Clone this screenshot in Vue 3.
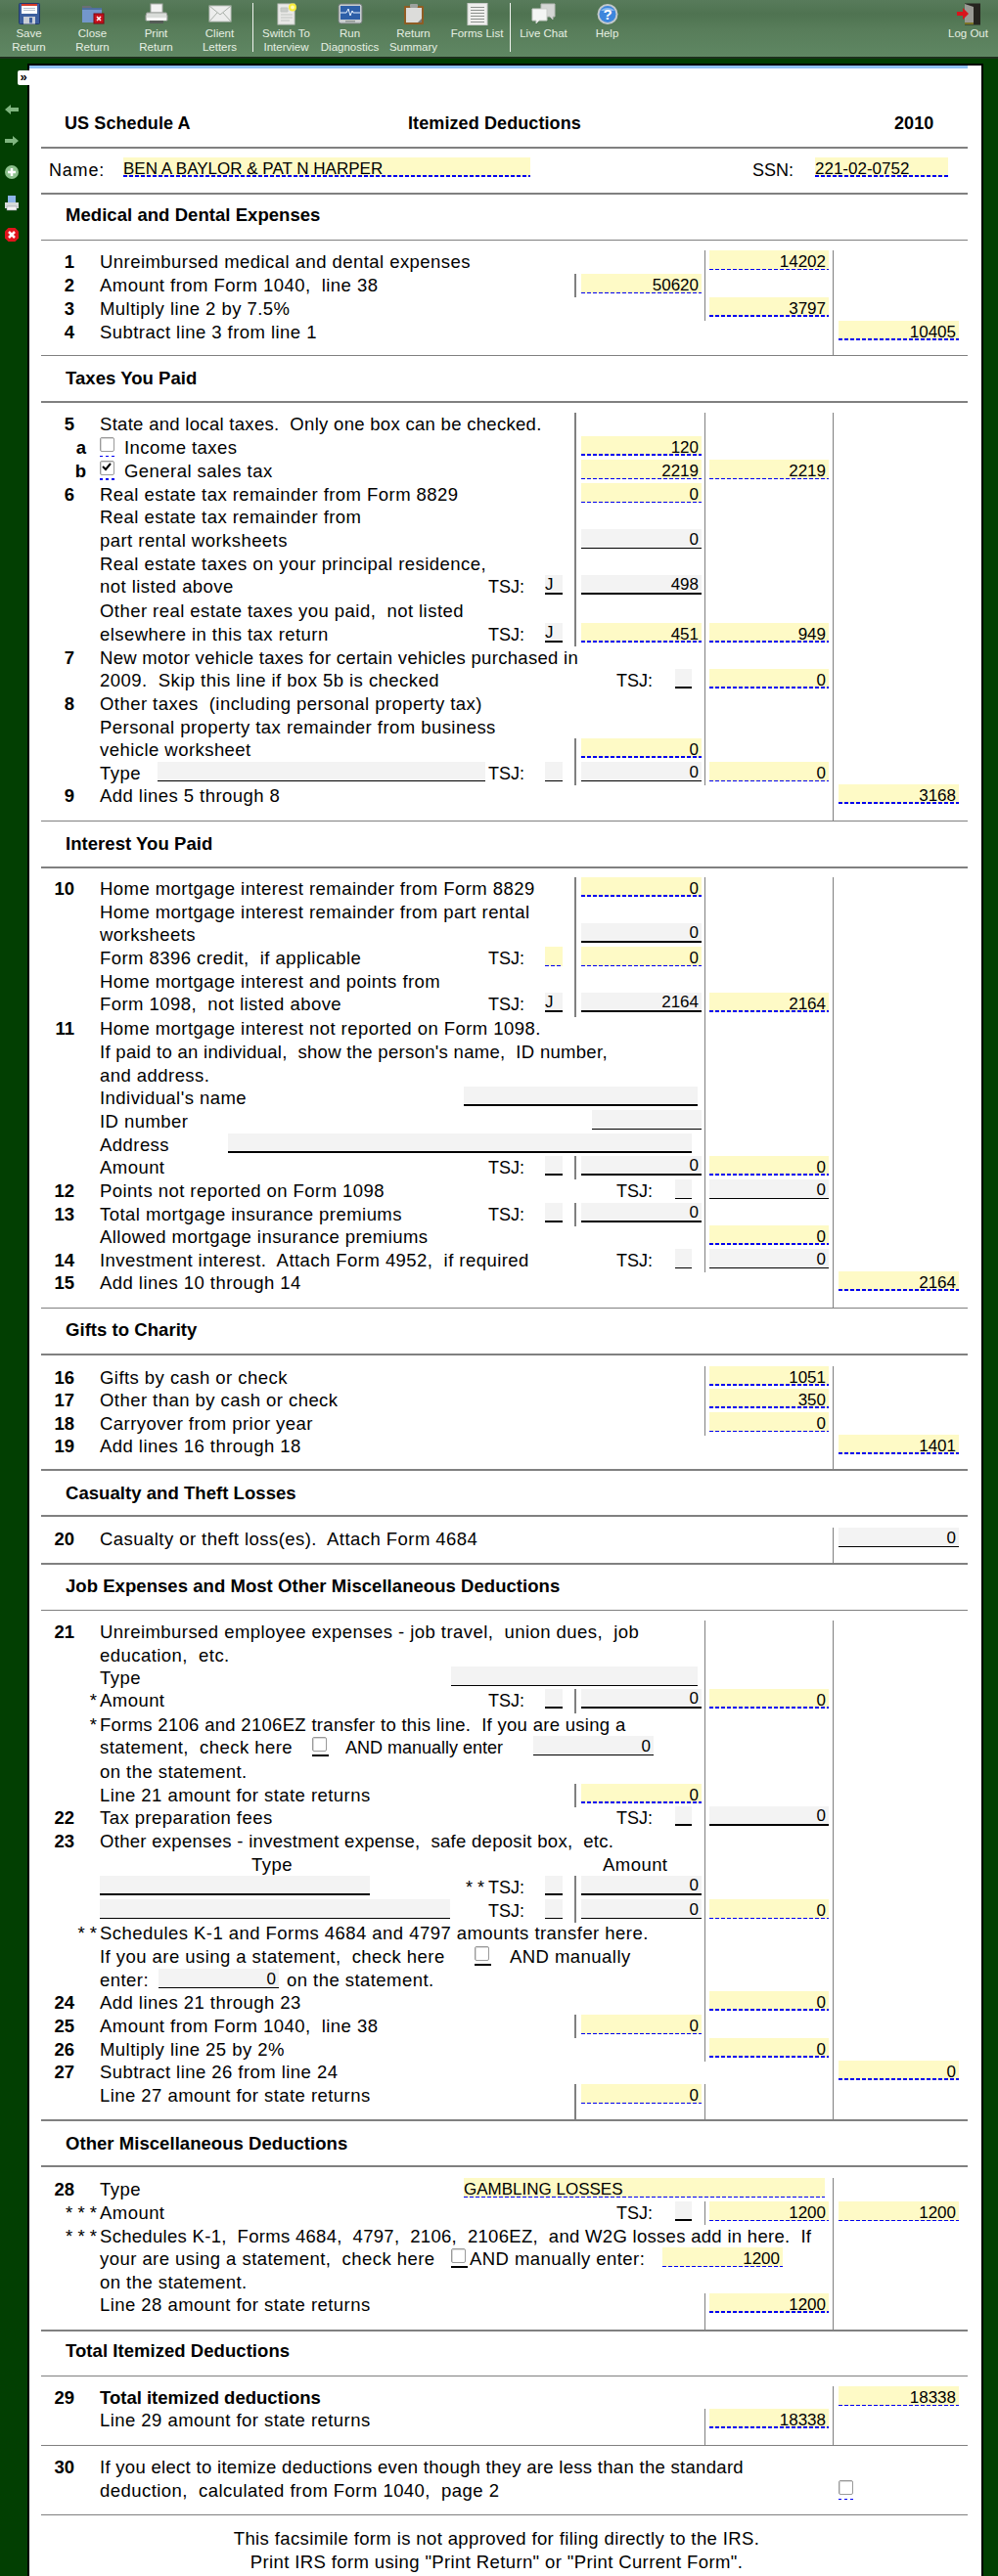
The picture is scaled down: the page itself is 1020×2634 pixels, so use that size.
<script setup>
const Y = (v, t = 2, x = {}) => ({ k: 'f', tone: 'y', v, t, ...x })
const G = (v, t = 2, x = {}) => ({ k: 'f', tone: 'g', v, t, ...x })
const CK = (t = 2, x = {}) => ({ k: 'ck', t, ...x })
const T = (x, v, tight, snug) => ({ k: 't', x, v, tight, snug })

const tools = [
  { id: 'save', l: ['Save', 'Return'] },
  { id: 'close', l: ['Close', 'Return'] },
  { id: 'print', l: ['Print', 'Return'] },
  { id: 'mail', l: ['Client', 'Letters'] },
  { sep: true },
  { id: 'switch', l: ['Switch To', 'Interview'] },
  { id: 'diag', l: ['Run', 'Diagnostics'] },
  { id: 'clip', l: ['Return', 'Summary'] },
  { id: 'list', l: ['Forms List'] },
  { sep: true },
  { id: 'chat', l: ['Live Chat'] },
  { id: 'help', l: ['Help'] },
  { id: 'logout', l: ['Log Out'], end: true }
]

const list = []
const rule = (y, t = 1) => list.push({ kind: 'rule', y, t })
const head = (y, text, c) => list.push({ kind: 'head', y, text, pad: c - y - 12 })
const sp = (y, lines) => list.push({ kind: 'row', y, lines, items: [], cells: [], n: '' })

function r(y, lines, n, text, o = {}) {
  let items = []
  if (text) items.push(T(102, text, false, o.snug))
  if (o.items) items = items.concat(o.items)
  if (o.tsj) {
    const near = o.tsj === 'near'
    items.push(T(near ? 499 : 630, 'TSJ:', true))
    items.push({
      k: 'f', tone: o.tone || 'g', t: o.tt || 2, v: o.tv || '', left: true,
      x: near ? 557 : 690, w: near ? 18 : 17
    })
  }
  items.sort((p, q) => p.x - q.x)
  if (items.length && items[0].x > 102) items.unshift(T(102, ''))
  items.forEach((it, i) => {
    it.box = items[i + 1] ? items[i + 1].x - it.x : null
  })
  const span = !lines.includes('b') && !o.b ? 3 : !lines.includes('a') && !o.a ? 2 : 1
  const cells = []
  if (span < 2) cells.push({ col: 'a', on: lines.includes('a'), f: o.a })
  if (span < 3) cells.push({ col: 'b', on: lines.includes('b'), f: o.b })
  cells.push({ col: 'c', on: lines.includes('c'), f: o.c })
  list.push({ kind: 'row', y, lines, n, items, cells, span, bold: o.bold })
}

const L = 'abc'
rule(150, 2)
list.push({ kind: 'name', y: 152 })
rule(197, 2)
head(199, 'Medical and Dental Expenses', 220)
rule(245, 1)
sp(246, 'bc')
r(256, 'bc', '1', 'Unreimbursed medical and dental expenses', { b: Y(14202, 1) })
r(280, L, '2', 'Amount from Form 1040,  line 38', { a: Y(50620, 1) })
r(304, 'bc', '3', 'Multiply line 2 by 7.5%', { b: Y(3797) })
r(328, 'c', '4', 'Subtract line 3 from line 1', { c: Y(10405) })
rule(363, 1)
head(364, 'Taxes You Paid', 387)
rule(410, 2)
sp(412, L)
r(422, L, '5', 'State and local taxes.  Only one box can be checked.', { snug: true })
r(446, L, 'a', '', { items: [CK(1, { x: 102, dash: true }), T(127, 'Income taxes')], a: Y(120) })
r(470, L, 'b', '', { items: [CK(2, { x: 102, dash: true, on: true }), T(127, 'General sales tax')], a: Y(2219, 1), b: Y(2219, 1) })
r(494, L, '6', 'Real estate tax remainder from Form 8829', { a: Y(0, 1) })
r(517, L, '', 'Real estate tax remainder from')
r(541, L, '', 'part rental worksheets', { a: G(0, 1) })
r(565, L, '', 'Real estate taxes on your principal residence,')
r(588, L, '', 'not listed above', { tsj: 'near', tv: 'J', a: G(498) })
r(613, L, '', 'Other real estate taxes you paid,  not listed')
r(637, L, '', 'elsewhere in this tax return', { tsj: 'near', tv: 'J', a: Y(451), b: Y(949) })
r(661, 'bc', '7', 'New motor vehicle taxes for certain vehicles purchased in', { snug: true })
r(684, 'bc', '', '2009.  Skip this line if box 5b is checked', { tsj: 'far', b: Y(0) })
r(708, 'bc', '8', 'Other taxes  (including personal property tax)')
r(732, 'bc', '', 'Personal property tax remainder from business')
r(755, L, '', 'vehicle worksheet', { a: Y(0) })
r(779, L, '', 'Type', { items: [G('', 1, { x: 161, w: 335 })], tsj: 'near', tt: 1, a: G(0, 1), b: Y(0, 1) })
r(802, 'c', '9', 'Add lines 5 through 8', { c: Y(3168) })
rule(839, 1)
head(840, 'Interest You Paid', 863)
rule(886, 2)
sp(888, L)
r(897, L, '10', 'Home mortgage interest remainder from Form 8829', { a: Y(0) })
r(921, L, '', 'Home mortgage interest remainder from part rental')
r(944, L, '', 'worksheets', { a: G(0) })
r(968, L, '', 'Form 8396 credit,  if applicable', { tsj: 'near', tone: 'y', tt: 1, a: Y(0, 1) })
r(992, L, '', 'Home mortgage interest and points from')
r(1015, L, '', 'Form 1098,  not listed above', { tsj: 'near', tv: 'J', a: G(2164), b: Y(2164) })
r(1040, 'bc', '11', 'Home mortgage interest not reported on Form 1098.')
r(1064, 'bc', '', "If paid to an individual,  show the person's name,  ID number,", { snug: true })
r(1088, 'bc', '', 'and address.')
r(1111, 'bc', '', "Individual's name", { items: [G('', 2, { x: 474, w: 239 })] })
r(1135, 'bc', '', 'ID number', { items: [G('', 1, { x: 605, w: 112 })] })
r(1159, 'bc', '', 'Address', { items: [G('', 2, { x: 233, w: 474 })] })
r(1182, L, '', 'Amount', { tsj: 'near', a: G(0), b: Y(0) })
r(1206, 'bc', '12', 'Points not reported on Form 1098', { tsj: 'far', tt: 1, b: G(0, 1) })
r(1230, L, '13', 'Total mortgage insurance premiums', { tsj: 'near', a: G(0) })
r(1253, 'bc', '', 'Allowed mortgage insurance premiums', { b: Y(0) })
r(1277, 'bc', '14', 'Investment interest.  Attach Form 4952,  if required', { tsj: 'far', tt: 1, b: G(0, 1) })
r(1300, 'c', '15', 'Add lines 10 through 14', { c: Y(2164) })
rule(1337, 1)
head(1338, 'Gifts to Charity', 1360)
rule(1384, 2)
sp(1386, 'bc')
r(1397, 'bc', '16', 'Gifts by cash or check', { b: Y(1051) })
r(1420, 'bc', '17', 'Other than by cash or check', { b: Y(350) })
r(1444, 'bc', '18', 'Carryover from prior year', { b: Y(0, 1) })
r(1467, 'c', '19', 'Add lines 16 through 18', { c: Y(1401) })
rule(1502, 2)
head(1504, 'Casualty and Theft Losses', 1527)
rule(1549, 2)
sp(1551, 'c')
r(1562, 'c', '20', 'Casualty or theft loss(es).  Attach Form 4684', { c: G(0, 1) })
rule(1598, 2)
head(1600, 'Job Expenses and Most Other Miscellaneous Deductions', 1622)
rule(1646, 1)
sp(1647, 'bc')
r(1657, 'bc', '21', 'Unreimbursed employee expenses - job travel,  union dues,  job')
r(1681, 'bc', '', 'education,  etc.')
r(1704, 'bc', '', 'Type', { items: [G('', 1, { x: 461, w: 252 })] })
r(1727, L, '*', 'Amount', { tsj: 'near', a: G(0), b: Y(0) })
r(1752, 'bc', '*', 'Forms 2106 and 2106EZ transfer to this line.  If you are using a', { snug: true })
r(1775, 'bc', '', 'statement,  check here', {
  items: [CK(2, { x: 319 }), T(353, 'AND manually enter', true), G(0, 1, { x: 545, w: 123 })]
})
r(1800, 'bc', '', 'on the statement.')
r(1824, L, '', 'Line 21 amount for state returns', { a: Y(0) })
r(1847, 'bc', '22', 'Tax preparation fees', { tsj: 'far', b: G(0) })
r(1871, 'bc', '23', 'Other expenses - investment expense,  safe deposit box,  etc.', { snug: true })
r(1895, 'bc', '', '', { items: [T(257, 'Type'), T(616, 'Amount')] })
r(1918, L, '', '', { items: [G('', 2, { x: 102, w: 276 }), T(476, '* *', true)], tsj: 'near', a: G(0) })
r(1942, L, '', '', { items: [G('', 1, { x: 102, w: 358 })], tsj: 'near', tt: 1, a: G(0, 1), b: Y(0, 1) })
r(1965, 'bc', '* *', 'Schedules K-1 and Forms 4684 and 4797 amounts transfer here.')
r(1989, 'bc', '', 'If you are using a statement,  check here', { items: [CK(2, { x: 485 }), T(521, 'AND manually')] })
r(2013, 'bc', '', '', { items: [T(102, 'enter:'), G(0, 1, { x: 162, w: 123 }), T(293, 'on the statement.')] })
r(2036, 'bc', '24', 'Add lines 21 through 23', { b: Y(0) })
r(2060, L, '25', 'Amount from Form 1040,  line 38', { a: Y(0, 1) })
r(2084, 'bc', '26', 'Multiply line 25 by 2%', { b: Y(0) })
r(2107, 'c', '27', 'Subtract line 26 from line 24', { c: Y(0) })
r(2131, L, '', 'Line 27 amount for state returns', { a: Y(0, 1) })
rule(2167, 2)
head(2169, 'Other Miscellaneous Deductions', 2192)
rule(2214, 2)
sp(2216, 'c')
r(2227, 'c', '28', 'Type', { items: [Y('GAMBLING LOSSES', 1, { x: 474, w: 369, left: true })] })
r(2251, 'bc', '* * *', 'Amount', { tsj: 'far', b: Y(1200, 1), c: Y(1200, 1) })
r(2275, 'c', '* * *', 'Schedules K-1,  Forms 4684,  4797,  2106,  2106EZ,  and W2G losses add in here.  If', { snug: true })
r(2298, 'c', '', 'your are using a statement,  check here', {
  items: [CK(2, { x: 461 }), T(480, 'AND manually enter:'), Y(1200, 1, { x: 677, w: 123 })]
})
r(2322, 'c', '', 'on the statement.')
r(2345, 'bc', '', 'Line 28 amount for state returns', { b: Y(1200) })
rule(2382, 2)
head(2384, 'Total Itemized Deductions', 2404)
rule(2429, 1)
sp(2430, 'c')
r(2440, 'c', '29', 'Total itemized deductions', { bold: true, c: Y(18338, 1) })
r(2463, 'bc', '', 'Line 29 amount for state returns', { b: Y(18338) })
rule(2500, 1)
sp(2501, '')
r(2511, '', '30', 'If you elect to itemize deductions even though they are less than the standard', { snug: true })
r(2535, '', '', 'deduction,  calculated from Form 1040,  page 2', { c: CK(1, { dash: true }) })
rule(2571, 1)
list.push({ y: 2572, kind: 'end' })

const rows = list.slice(0, -1).map((row, i) => ({ ...row, h: list[i + 1].y - row.y }))
</script>

<template>
  <div class="page">
    <header class="toolbar">
      <template v-for="(tool, i) in tools" :key="i">
        <div v-if="tool.sep" class="sep"></div>
        <div v-else class="tool" :class="{ end: tool.end }">
          <svg class="ic" width="26" height="23" viewBox="0 0 26 23">
            <g v-if="tool.id === 'save'">
              <rect x="2.500" y="0.500" width="21" height="21" rx="1" fill="#3d5f9e" stroke="#223a6a" />
              <rect x="5" y="1" width="16" height="10" fill="#fff" />
              <rect x="5" y="1" width="16" height="2" fill="#d43a2a" />
              <path d="M7 5.500h12M7 7.500h12" stroke="#b9c2d0" />
              <rect x="7" y="14" width="12" height="7.500" fill="#c9ced6" />
              <rect x="13" y="15" width="3" height="5.500" fill="#3d5f9e" />
            </g>
            <g v-else-if="tool.id === 'close'">
              <path d="M2 3h8l2 2h10v14H2z" fill="#4e6f9f" />
              <path d="M2 7h20v13H2z" fill="#7397cc" />
              <path d="M2 3h8l2 2H2z" fill="#6b6f74" />
              <rect x="14" y="11" width="10" height="10" fill="#c8101c" stroke="#7e0610" />
              <path d="M17 14l4 4m0-4l-4 4" stroke="#fff" stroke-width="1.500" />
            </g>
            <g v-else-if="tool.id === 'print'">
              <rect x="7" y="1" width="12" height="9" fill="#f2f2f2" stroke="#a8aca8" />
              <path d="M3 10h20l1 3v5H2v-5z" fill="#d9dcd9" stroke="#9a9e9a" />
              <rect x="3" y="15" width="20" height="3" fill="#f7f7f7" />
              <rect x="6" y="18" width="14" height="3" fill="#555c57" />
            </g>
            <g v-else-if="tool.id === 'mail'">
              <rect x="2" y="3" width="22" height="16" fill="#ecedec" stroke="#bfc3bf" />
              <path d="M2 3l11 9 11-9M2 19l8-9M24 19l-8-9" fill="none" stroke="#aab0aa" />
            </g>
            <g v-else-if="tool.id === 'switch'">
              <rect x="4" y="1" width="17" height="21" fill="#e8e8e6" stroke="#c4c6c4" />
              <path d="M7 5h7v4H7zM7 12h12M7 15h12M7 18h9" fill="#c9ccc9" stroke="#c0c4c0" />
              <circle cx="19" cy="4.500" r="4" fill="#f7ec3a" />
              <circle cx="19" cy="4.500" r="2" fill="#fffbb0" />
            </g>
            <g v-else-if="tool.id === 'diag'">
              <rect x="1" y="1" width="24" height="20" rx="2.500" fill="#c9ced0" stroke="#727a78" />
              <rect x="3" y="3" width="20" height="14" fill="#2d5fa8" />
              <path d="M3 10h6l2-4 2 7 2-5 1 2h7" fill="none" stroke="#e9f3ff" />
              <rect x="8" y="18" width="10" height="1.500" fill="#8d9491" />
            </g>
            <g v-else-if="tool.id === 'clip'">
              <rect x="3" y="3" width="20" height="19" rx="1" fill="#8f5d24" />
              <rect x="5" y="5" width="16" height="15" fill="#dcdcda" />
              <rect x="9" y="1" width="8" height="4" rx="1" fill="#9da19e" />
              <path d="M17 20l4-4v4z" fill="#777" />
            </g>
            <g v-else-if="tool.id === 'list'">
              <rect x="3" y="0.500" width="20" height="22" fill="#efefed" stroke="#c9ccc9" />
              <path d="M6 4.500h14M6 7.500h14M6 10.500h14M6 13.500h14M6 16.500h14M6 19.500h14" stroke="#8d918d" />
            </g>
            <g v-else-if="tool.id === 'chat'">
              <path d="M10 1h14v13h-2v3l-3-3h-9z" fill="#d4d6d4" stroke="#b8bbb8" />
              <path d="M1 6h15v12H8l-3 3v-3H1z" fill="#f4f5f4" stroke="#c9ccc9" />
            </g>
            <g v-else-if="tool.id === 'help'">
              <circle cx="13" cy="11.500" r="10.500" fill="#c3c9cc" />
              <circle cx="13" cy="11.500" r="8.500" fill="#3d86dc" />
              <path d="M6 8a8 6 0 0 1 14 0z" fill="#8ab9ee" />
              <text x="13" y="16.500" text-anchor="middle" class="q">?</text>
            </g>
            <g v-else-if="tool.id === 'logout'">
              <rect x="9" y="0.500" width="16" height="22" fill="#26241f" />
              <path d="M9 1l9 3v18H9z" fill="#9a9a94" />
              <path d="M9 20h9v2H9z" fill="#7b7426" />
              <path d="M1 9h6V5l6 6-6 6v-4H1z" fill="#d8141c" />
            </g>
          </svg>
          <div v-for="line in tool.l" :key="line" class="lbl">{{ line }}</div>
        </div>
      </template>
    </header>

    <div class="body">
      <aside class="rail">
        <div class="tab">&raquo;</div>
        <svg width="16" height="20" viewBox="0 0 16 20"><path d="M1 10l6-5v3h8v4H7v3z" fill="#7fb57f" /></svg>
        <svg width="16" height="20" viewBox="0 0 16 20"><path d="M15 10l-6-5v3H1v4h8v3z" fill="#7fb57f" /></svg>
        <svg width="16" height="20" viewBox="0 0 16 20"><circle cx="8" cy="10" r="7" fill="#8cc08c" /><path d="M8 6v8M4 10h8" stroke="#fff" stroke-width="2.500" /></svg>
        <svg width="16" height="20" viewBox="0 0 16 20"><rect x="4" y="2" width="8" height="7" fill="#8db4e8" /><path d="M1 9h14v6H1z" fill="#d6dada" /><rect x="3" y="13" width="10" height="4" fill="#f4f4f4" stroke="#889" stroke-width=".5" /></svg>
        <svg width="16" height="20" viewBox="0 0 16 20"><path d="M4.500 3h7L15 6.500v7L11.500 17h-7L1 13.500v-7z" fill="#e0141c" /><path d="M5 7l6 6m0-6l-6 6" stroke="#fff" stroke-width="2.500" /></svg>
      </aside>

      <main class="panel">
        <div class="form">
          <div class="title">
            <span class="ti1">US Schedule A</span>
            <span class="ti2">Itemized Deductions</span>
            <span class="ti3">2010</span>
          </div>

          <template v-for="(row, i) in rows" :key="i">
            <div v-if="row.kind === 'rule'" class="rule" :style="{ height: row.t + 'px' }"></div>

            <div v-else-if="row.kind === 'name'" class="namebar" :style="{ height: row.h + 'px' }">
              <span class="nm1">Name:</span>
              <div class="fld y t2 left nmf">BEN A BAYLOR &amp; PAT  N HARPER</div>
              <span class="nm2">SSN:</span>
              <div class="fld y t2 left ssn">221-02-0752</div>
            </div>

            <div v-else-if="row.kind === 'head'" class="head" :style="{ height: row.h + 'px', paddingTop: row.pad + 'px' }">{{ row.text }}</div>

            <div v-else class="row" :style="{ height: row.h + 'px' }">
              <div class="main" :class="{ s2: row.span === 2, s3: row.span === 3 }">
                <span class="num" :class="{ let: /[ab]/.test(row.n), star: row.n.includes('*') }">{{ row.n }}</span>
                <div
                  v-for="(it, j) in row.items"
                  :key="j"
                  class="item"
                  :class="{ boldt: row.bold, tight: it.tight, snug: it.snug }"
                  :style="it.box ? { width: it.box + 'px' } : {}"
                >
                  <template v-if="it.k === 't'">{{ it.v }}</template>
                  <div
                    v-else-if="it.k === 'f'"
                    class="fld"
                    :class="[it.tone, 't' + it.t, { left: it.left }]"
                    :style="{ width: it.w + 'px' }"
                  >{{ it.v }}</div>
                  <div v-else class="ck" :class="[{ dash: it.dash }, 't' + it.t]">
                    <div class="ckb">
                      <svg v-if="it.on" width="12" height="11" viewBox="0 0 12 11"><path d="M2 5l3 3 5-6" fill="none" stroke="#000" stroke-width="2" /></svg>
                    </div>
                  </div>
                </div>
              </div>
              <div
                v-for="cell in row.cells"
                :key="cell.col"
                class="cell"
                :class="[cell.col, { on: cell.on }]"
              >
                <template v-if="cell.f">
                  <div v-if="cell.f.k === 'f'" class="fld" :class="[cell.f.tone, 't' + cell.f.t]">{{ cell.f.v }}</div>
                  <div v-else class="ck" :class="[{ dash: cell.f.dash }, 't' + cell.f.t]"><div class="ckb"></div></div>
                </template>
              </div>
            </div>
          </template>

          <div class="foot">
            <div>This facsimile form is not approved for filing directly to the IRS.</div>
            <div>Print IRS form using "Print Return" or "Print Current Form".</div>
          </div>
        </div>
      </main>
    </div>
  </div>
</template>

<style>
html, body { margin: 0; background: #023f02; }
</style>

<style scoped>
.page {
  width: 1020px;
  height: 2634px;
  overflow: hidden;
  background: #023f02;
  font-family: "Liberation Sans", Arial, sans-serif;
  color: #000;
}
.toolbar {
  height: 58px;
  display: flex;
  background: linear-gradient(#587b5b 0, #4f7351 14px, #587d5a 30px, #5f8763 58px);
  border-bottom: 2px solid #1d301d;
}
.tool { width: 65px; padding-top: 3px; text-align: center; flex: none; }
.tool:first-child { margin-left: -3px; }
.tool.end { margin-left: auto; margin-right: -2px; }
.ic { display: block; margin: 0 auto 1px; }
.q { font: bold 15px "Liberation Sans", sans-serif; fill: #fff; }
.lbl {
  font-size: 11.500px;
  line-height: 14px;
  color: #e6efe2;
  white-space: nowrap;
}
.sep { width: 1px; height: 50px; margin: 3px 1px 0; background: #f0f3ee; flex: none; }

.body { display: flex; padding-top: 5px; }
.rail {
  width: 24px;
  padding: 37px 0 0 0;
  margin-right: 4px;
  position: relative;
  display: flex;
  flex-direction: column;
  align-items: center;
  gap: 12px;
  flex: none;
}
.tab {
  position: absolute;
  left: 18px;
  top: 7px;
  width: 12px;
  height: 15px;
  background: #fff;
  border-radius: 2px 0 0 2px;
  font: bold 13px/13px "Liberation Sans", sans-serif;
  text-align: center;
  z-index: 2;
}
.panel {
  width: 973px;
  height: 2600px;
  flex: none;
  background: #fff;
  border: 2px solid #000;
  border-bottom: 0;
}
.form { border-top: 3px solid #8fc1f4; padding-left: 12px; width: 947px; }
.title { height: 80px; display: flex; align-items: flex-end; padding: 0 0 12px 24px; box-sizing: border-box; font-weight: bold; font-size: 18px; line-height: 24px; letter-spacing: .1px; }
.ti1 { width: 351px; }
.ti2 { width: 497px; }
.rule { background: #808080; }
.namebar { display: flex; box-sizing: border-box; padding: 9px 0 0 8px; font-size: 18px; line-height: 26px; }
.nm1 { width: 76px; letter-spacing: .8px; }
.nmf { width: 416px; height: 21px; letter-spacing: -.2px; }
.nm2 { width: 64px; margin-left: 227px; }
.ssn { width: 136px; height: 21px; }
.head { box-sizing: border-box; padding-left: 25px; font-size: 18.500px; font-weight: bold; line-height: 24px; white-space: pre; letter-spacing: .05px; }
.row { display: grid; grid-template-columns: 545px 133px 131px 138px; font-size: 18.500px; line-height: 24px; letter-spacing: .45px; }
.main { display: flex; align-items: flex-start; min-width: 0; white-space: pre; }
.main.s2 { grid-column: 1 / 3; }
.main.s3 { grid-column: 1 / 4; }
.num { width: 60px; flex: none; box-sizing: border-box; padding-right: 26px; text-align: right; font-weight: bold; letter-spacing: 0; }
.num.let { padding-right: 14px; }
.num.star { font-weight: normal; padding-right: 3px; }
.item { flex: none; }
.item.tight { font-size: 18px; letter-spacing: 0; }
.item.snug { letter-spacing: .3px; }
.boldt { font-weight: bold; letter-spacing: 0; }
.cell { box-sizing: border-box; min-width: 0; }
.cell.a { padding: 0 3px 0 7px; }
.cell.b { padding: 0 4px 0 5px; }
.cell.c { padding: 0 9px 0 6px; }
.cell.a.on { padding-left: 5px; border-left: 2px solid #808080; }
.cell.b.on { padding-left: 4px; border-left: 1px solid #808080; }
.cell.c.on { padding-left: 5px; border-left: 1px solid #808080; }
.fld {
  box-sizing: border-box;
  height: 20px;
  display: flex;
  align-items: flex-end;
  justify-content: flex-end;
  padding: 0 3px 1px 0;
  font-size: 17px;
  line-height: 14px;
  letter-spacing: 0;
  white-space: pre;
  overflow: hidden;
}
.fld.left { justify-content: flex-start; padding: 0 0 1px; }
.fld.y { background-color: #fefac6; background-repeat: repeat-x; background-position: left bottom; background-image: linear-gradient(90deg, #0000f0 4px, transparent 4px); }
.fld.y.t1 { background-size: 6px 1px; }
.fld.y.t2 { background-size: 6px 2px; }
.fld.g { background: #f3f3f3; border-bottom: 1px solid #000; }
.fld.g.t2 { border-bottom-width: 2px; }
.ck { width: 17px; height: 20px; box-sizing: border-box; border-bottom: 2px solid #000; }
.ck.t1 { border-bottom-width: 1px; }
.ck.dash { border-bottom: 0; background: linear-gradient(90deg, #0000f0 3px, transparent 3px) left bottom / 6px 1px repeat-x; }
.ck.dash.t2 { background-size: 6px 2px; }
.ckb {
  width: 15px;
  height: 15px;
  margin-top: 1px;
  box-sizing: border-box;
  background: #fff;
  border: 1px solid #9a9a9a;
  border-radius: 2px;
  box-shadow: inset 1px 1px 0 #d8d8d8;
  display: flex;
}
.foot { padding: 12px 16px 0 0; text-align: center; font-size: 18.500px; line-height: 23.500px; letter-spacing: .38px; white-space: pre; }
</style>
